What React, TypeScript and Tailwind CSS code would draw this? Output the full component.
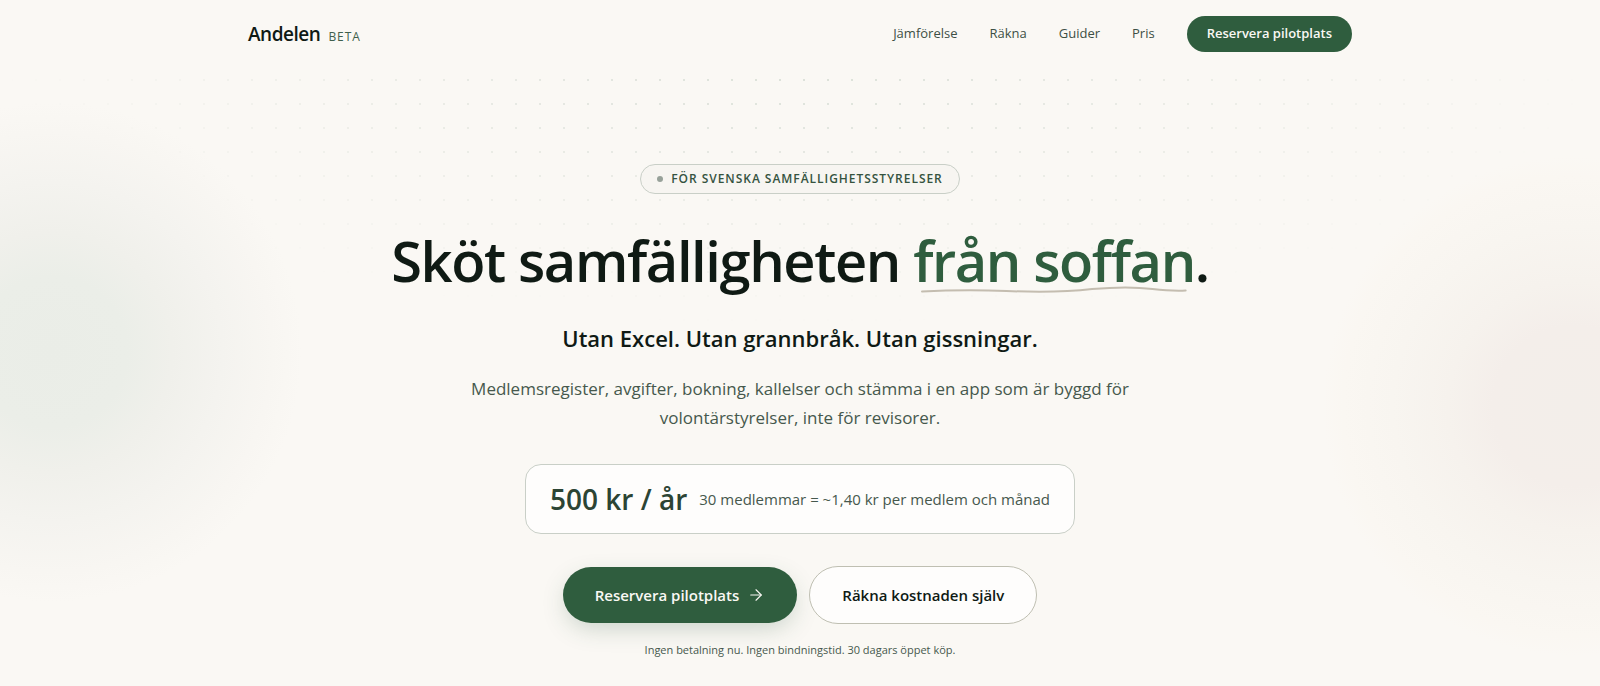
import React from 'react';
import { ArrowRight } from 'lucide-react';

const navLinks = [
  { label: 'Jämförelse', href: '#jamforelse' },
  { label: 'Räkna', href: '#rakna' },
  { label: 'Guider', href: '#guider' },
  { label: 'Pris', href: '#pris' },
];

const Navbar: React.FC = () => {
  return (
    <header>
      <div className="mx-auto flex h-[68px] max-w-6xl items-center justify-between px-6">
        <a href="#" className="flex items-baseline gap-2">
          <span className="text-[19px] font-semibold tracking-tight text-[#0f1a14]">Andelen</span>
          <span className="text-[12px] font-medium tracking-[0.08em] text-[#3f5f4c]">BETA</span>
        </a>
        <nav className="flex items-center gap-8 text-[13px] text-[#3d4f44]">
          {navLinks.map((link) => (
            <a key={link.href} href={link.href} className="hidden sm:block">
              {link.label}
            </a>
          ))}
          <button
            type="button"
            className="h-9 rounded-full bg-[#2f5d3e] px-5 text-[13px] font-semibold text-[#faf8f4]"
          >
            Reservera pilotplats
          </button>
        </nav>
      </div>
    </header>
  );
};

// Dot grid and the two soft colour spots behind the hero
const HeroBackdrop: React.FC = () => {
  return (
    <div aria-hidden="true" className="pointer-events-none absolute inset-0 overflow-hidden">
      <div className="absolute inset-x-0 top-0 h-72 bg-[radial-gradient(circle,#2f5d3e26_1px,transparent_1px)] bg-size-[24px_24px] [mask-image:radial-gradient(ellipse_50%_90%_at_50%_0%,black,transparent)]" />
      <div className="absolute top-[34px] -left-[198px] size-[500px] rounded-full bg-[radial-gradient(closest-side,#eaede7_0%,#ebeee8_30%,#f0f0eb_48%,#f4f3ef_68%,#f8f6f2_88%,transparent_100%)]" />
      <div className="absolute top-[88px] -right-[223px] size-[500px] rounded-full bg-[radial-gradient(closest-side,#f3eeea_0%,#f4eeea_32%,#f6f2ed_50%,#f8f5f0_72%,#faf7f2_92%,transparent_100%)]" />
    </div>
  );
};

const Hero: React.FC = () => {
  return (
    <section className="relative">
      <HeroBackdrop />
      <div className="relative mx-auto flex max-w-6xl flex-col items-center px-6 pt-24 pb-6 text-center">
        <div className="flex h-[30px] items-center gap-2 rounded-full border border-[#c9cfc7] bg-[#f7f5f1] px-4">
          <span className="size-1.5 rounded-full bg-[#97a199]" />
          <span className="text-[12px] font-semibold tracking-[0.08em] text-[#35533f]">
            FÖR SVENSKA SAMFÄLLIGHETSSTYRELSER
          </span>
        </div>

        <h1 className="mt-8 text-[56px] leading-[68px] font-semibold tracking-tight text-[#0f1a14]">
          Sköt samfälligheten{' '}
          <span className="relative inline-block text-[#2f5d3e]">
            från soffan
            <svg
              viewBox="0 0 264 8"
              preserveAspectRatio="none"
              fill="none"
              className="absolute bottom-0 left-0 h-2 w-full px-2"
            >
              <path
                d="M1 5.5C30 4 60 4 85 5C120 6.500 145 6 170 3C195 .8 215 1 230 3C243 4.500 253 5 263 4.500"
                stroke="#c4bdb0"
                strokeWidth="2"
                strokeLinecap="round"
              />
            </svg>
          </span>
          .
        </h1>

        <p className="mt-7 text-[22px] leading-8 font-semibold text-[#0f1a14]">
          Utan Excel. Utan grannbråk. Utan gissningar.
        </p>
        <p className="mt-5 max-w-2xl text-[17px] leading-[29px] text-[#46584d]">
          Medlemsregister, avgifter, bokning, kallelser och stämma i en app som är byggd för
          volontärstyrelser, inte för revisorer.
        </p>

        <div className="mt-8 flex min-h-[70px] items-center gap-3 rounded-2xl border border-[#c9cfc7] bg-[#fefdfc] px-6">
          <span className="text-[28px] font-semibold text-[#2c4434]">500 kr / år</span>
          <span className="text-[15px] text-[#46584d]">30 medlemmar = ~1,40 kr per medlem och månad</span>
        </div>

        <div className="mt-8 flex flex-wrap items-center justify-center gap-3">
          <button
            type="button"
            className="flex h-14 items-center gap-2 rounded-full bg-[#2f5d3e] px-8 text-[15px] font-semibold text-[#faf8f4] shadow-[0_8px_24px_-4px_#2f5d3e40]"
          >
            Reservera pilotplats
            <ArrowRight size={18} strokeWidth={1.5} />
          </button>
          <button
            type="button"
            className="h-[58px] rounded-full border border-[#bfbfb2] bg-[#fefdfc] px-8 text-[15px] font-semibold text-[#0f1a14]"
          >
            Räkna kostnaden själv
          </button>
        </div>

        <p className="mt-4 text-[11px] leading-5 text-[#46584d]">
          Ingen betalning nu. Ingen bindningstid. 30 dagars öppet köp.
        </p>
      </div>
    </section>
  );
};

const App: React.FC = () => {
  return (
    <div className="min-h-screen bg-[#faf8f4] font-['Open_Sans','Noto_Sans',sans-serif]">
      <Navbar />
      <main>
        <Hero />
      </main>
    </div>
  );
};

export default App;
